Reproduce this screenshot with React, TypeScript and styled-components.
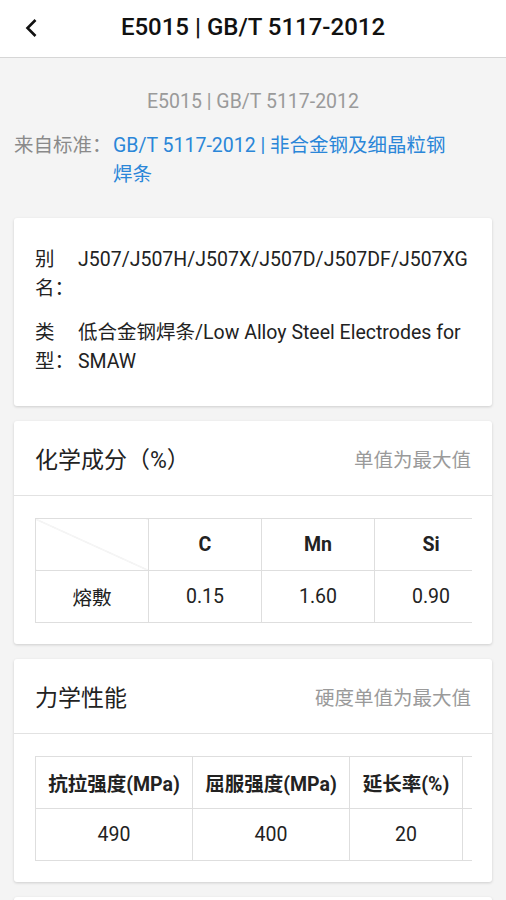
import React from 'react'
import styled, { createGlobalStyle } from 'styled-components'

const GlobalStyle = createGlobalStyle`
  html, body {
    margin: 0;
    padding: 0;
    background: #f4f4f4;
    font-family: Roboto, "Noto Sans CJK SC", sans-serif;
  }
  * { box-sizing: border-box; }
`

const Page = styled.div`
  width: 506px;
  height: 900px;
  background: #f4f4f4;
  overflow: hidden;
`

const Header = styled.div`
  height: 58px;
  background: #fff;
  border-bottom: 1px solid #d6d6d6;
  display: flex;
  align-items: center;
  justify-content: center;
  position: relative;
`

const BackButton = styled.div`
  position: absolute;
  left: 19px;
  top: 16px;
  width: 24px;
  height: 24px;
  display: flex;
  align-items: center;
  justify-content: center;
`

const Title = styled.div`
  font-size: 24px;
  font-weight: 500;
  color: #111;
  margin-top: -3px;
`

const Intro = styled.div`
  padding: 29px 14px 0;
  display: flex;
  flex-direction: column;
`

const SubTitle = styled.div`
  text-align: center;
  font-size: 19.5px;
  color: #9a9a9a;
  line-height: 29px;
`

const Source = styled.div`
  display: flex;
  margin-top: 15px;
  font-size: 19.5px;
  line-height: 29px;
`

const SourceLabel = styled.div`
  color: #8a8a8a;
  flex-shrink: 0;
  width: 99px;
`

const SourceLink = styled.div`
  color: #2a86d8;
  width: 350px;
`

const Cards = styled.div`
  padding: 29px 14px 0;
  display: flex;
  flex-direction: column;
  gap: 15px;
`

const Card = styled.div<{ h?: number }>`
  background: #fff;
  border-radius: 3px;
  box-shadow: 0 1px 3px rgba(0, 0, 0, 0.16);
  ${(p) => (p.h ? `height: ${p.h}px;` : '')}
`

const InfoBody = styled.div`
  padding: 27px 20px 30px 21px;
  display: flex;
  flex-direction: column;
  gap: 15px;
`

const InfoRow = styled.div`
  display: flex;
  font-size: 19.5px;
  line-height: 29px;
  color: #222;
`

const InfoLabel = styled.div`
  width: 43px;
  flex-shrink: 0;
`

const InfoValue = styled.div`
  flex: 1;
`

const CardHead = styled.div`
  height: 75px;
  padding: 0 21px;
  display: flex;
  align-items: center;
  justify-content: space-between;
  border-bottom: 1px solid #e2e2e2;
`

const CardTitle = styled.div`
  font-size: 23px;
  color: #222;
`

const CardNote = styled.div`
  font-size: 19.5px;
  color: #9a9a9a;
`

const TableWrap = styled.div`
  margin: 22px 20px 21px 21px;
  overflow: hidden;
`

const Table = styled.table`
  border-collapse: collapse;
  font-size: 19.5px;
  color: #222;
  table-layout: fixed;
`

const Cell = styled.td<{ w: number; head?: boolean }>`
  width: ${(p) => p.w}px;
  min-width: ${(p) => p.w}px;
  height: 52px;
  border: 1px solid #dedede;
  text-align: center;
  padding: 0;
  font-weight: ${(p) => (p.head ? 700 : 400)};
  white-space: nowrap;
`

const DiagCell = styled(Cell)`
  background: linear-gradient(
    to top right,
    transparent calc(50% - 0.6px),
    #e0e0e0 50%,
    transparent calc(50% + 0.6px)
  );
`

const chem = [
  { name: 'C', value: '0.15' },
  { name: 'Mn', value: '1.60' },
  { name: 'Si', value: '0.90' },
]

const mech = [
  { name: '抗拉强度(MPa)', value: '490', w: 157 },
  { name: '屈服强度(MPa)', value: '400', w: 157 },
  { name: '延长率(%)', value: '20', w: 113 },
  { name: '', value: '', w: 113 },
]

export default function App() {
  return (
    <Page>
      <GlobalStyle />
      <Header>
        <BackButton>
          <svg width="14" height="20" viewBox="0 0 14 20" fill="none">
            <path d="M11.5 2L3.5 10L11.5 18" stroke="#111" strokeWidth="2.6" />
          </svg>
        </BackButton>
        <Title>E5015 | GB/T 5117-2012</Title>
      </Header>
      <Intro>
        <SubTitle>E5015 | GB/T 5117-2012</SubTitle>
        <Source>
          <SourceLabel>来自标准：</SourceLabel>
          <SourceLink>GB/T 5117-2012 | 非合金钢及细晶粒钢焊条</SourceLink>
        </Source>
      </Intro>
      <Cards>
        <Card>
          <InfoBody>
            <InfoRow>
              <InfoLabel>别名：</InfoLabel>
              <InfoValue>J507/J507H/J507X/J507D/J507DF/J507XG</InfoValue>
            </InfoRow>
            <InfoRow>
              <InfoLabel>类型：</InfoLabel>
              <InfoValue>低合金钢焊条/Low Alloy Steel Electrodes for SMAW</InfoValue>
            </InfoRow>
          </InfoBody>
        </Card>
        <Card>
          <CardHead>
            <CardTitle>化学成分（%）</CardTitle>
            <CardNote>单值为最大值</CardNote>
          </CardHead>
          <TableWrap>
            <Table>
              <tbody>
                <tr>
                  <DiagCell as="th" w={113} />
                  {chem.map((c) => (
                    <Cell as="th" key={c.name} w={113} head>
                      {c.name}
                    </Cell>
                  ))}
                </tr>
                <tr>
                  <Cell w={113}>熔敷</Cell>
                  {chem.map((c) => (
                    <Cell key={c.name} w={113}>
                      {c.value}
                    </Cell>
                  ))}
                </tr>
              </tbody>
            </Table>
          </TableWrap>
        </Card>
        <Card>
          <CardHead>
            <CardTitle>力学性能</CardTitle>
            <CardNote>硬度单值为最大值</CardNote>
          </CardHead>
          <TableWrap>
            <Table>
              <tbody>
                <tr>
                  {mech.map((m, i) => (
                    <Cell as="th" key={i} w={m.w} head>
                      {m.name}
                    </Cell>
                  ))}
                </tr>
                <tr>
                  {mech.map((m, i) => (
                    <Cell key={i} w={m.w}>
                      {m.value}
                    </Cell>
                  ))}
                </tr>
              </tbody>
            </Table>
          </TableWrap>
        </Card>
        <Card h={200} />
      </Cards>
    </Page>
  )
}
